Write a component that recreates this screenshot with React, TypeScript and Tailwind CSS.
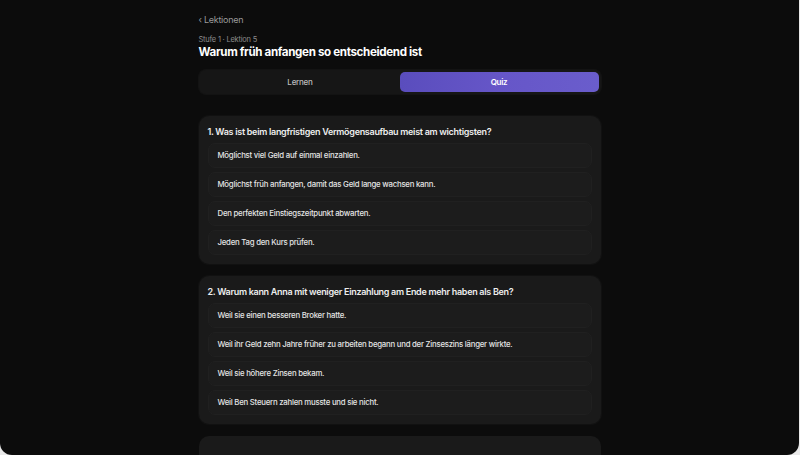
import React from "react";

type Question = { title: string; options: string[] };

const questions: Question[] = [
  {
    title: "1. Was ist beim langfristigen Vermögensaufbau meist am wichtigsten?",
    options: [
      "Möglichst viel Geld auf einmal einzahlen.",
      "Möglichst früh anfangen, damit das Geld lange wachsen kann.",
      "Den perfekten Einstiegszeitpunkt abwarten.",
      "Jeden Tag den Kurs prüfen.",
    ],
  },
  {
    title: "2. Warum kann Anna mit weniger Einzahlung am Ende mehr haben als Ben?",
    options: [
      "Weil sie einen besseren Broker hatte.",
      "Weil ihr Geld zehn Jahre früher zu arbeiten begann und der Zinseszins länger wirkte.",
      "Weil sie höhere Zinsen bekam.",
      "Weil Ben Steuern zahlen musste und sie nicht.",
    ],
  },
];

function QuestionCard({ q }: { q: Question }) {
  return (
    <div className="rounded-[10px] bg-[#1a1a1a] px-[9px] pt-[10px] pb-[9px] shadow-[0_0_0_1px_rgba(255,255,255,0.025)]">
      <div className="text-[9px] font-semibold tracking-[-0.033em] text-[#ededed] leading-[12px]">{q.title}</div>
      <div className="mt-[5px] flex flex-col gap-[4px]">
        {q.options.map((o) => (
          <div
            key={o}
            className="flex h-[25px] items-center rounded-[7px] border border-[#202020] bg-[#1c1c1c] px-[9px] text-[7.8px] font-medium tracking-[-0.031em] text-[#e4e4e4]"
          >
            {o}
          </div>
        ))}
      </div>
    </div>
  );
}

export default function App() {
  return (
    <div
      className="relative h-[455px] w-[800px] overflow-hidden bg-[#e9e9e9]"
      style={{ fontFamily: "Inter, 'Noto Sans', sans-serif" }}
    >
      <div className="h-full w-[799px] overflow-hidden rounded-b-[12px] bg-[#0c0c0c]">
        <div className="mx-auto w-[402px] pt-[14px]">
          <div className="text-[9px] tracking-[-0.03em] text-[#9a9a9a] leading-[12px]">‹ Lektionen</div>
          <div className="mt-[9px] text-[7.5px] tracking-[-0.03em] text-[#8c8c8c] leading-[10px]">Stufe 1 · Lektion 5</div>
          <div className="text-[11.6px] font-bold tracking-[-0.03em] text-white leading-[15px]">
            Warum früh anfangen so entscheidend ist
          </div>
          <div className="mt-[10px] flex h-[24px] rounded-[7px] bg-[#161616] p-[2px] shadow-[0_0_0_1px_rgba(255,255,255,0.03)]">
            <div className="flex flex-1 items-center justify-center text-[8px] font-medium tracking-[-0.03em] text-[#bdbdbd]">
              Lernen
            </div>
            <div className="flex flex-1 items-center justify-center rounded-[5px] bg-gradient-to-r from-[#5a4dbd] via-[#6656c8] to-[#6a5dcc] text-[8px] font-semibold tracking-[-0.03em] text-white">
              Quiz
            </div>
          </div>
          <div className="mt-[22px] flex flex-col gap-[12px]">
            {questions.map((q) => (
              <QuestionCard key={q.title} q={q} />
            ))}
            <div className="h-[60px] rounded-[10px] bg-[#1a1a1a]" />
          </div>
        </div>
      </div>
    </div>
  );
}
